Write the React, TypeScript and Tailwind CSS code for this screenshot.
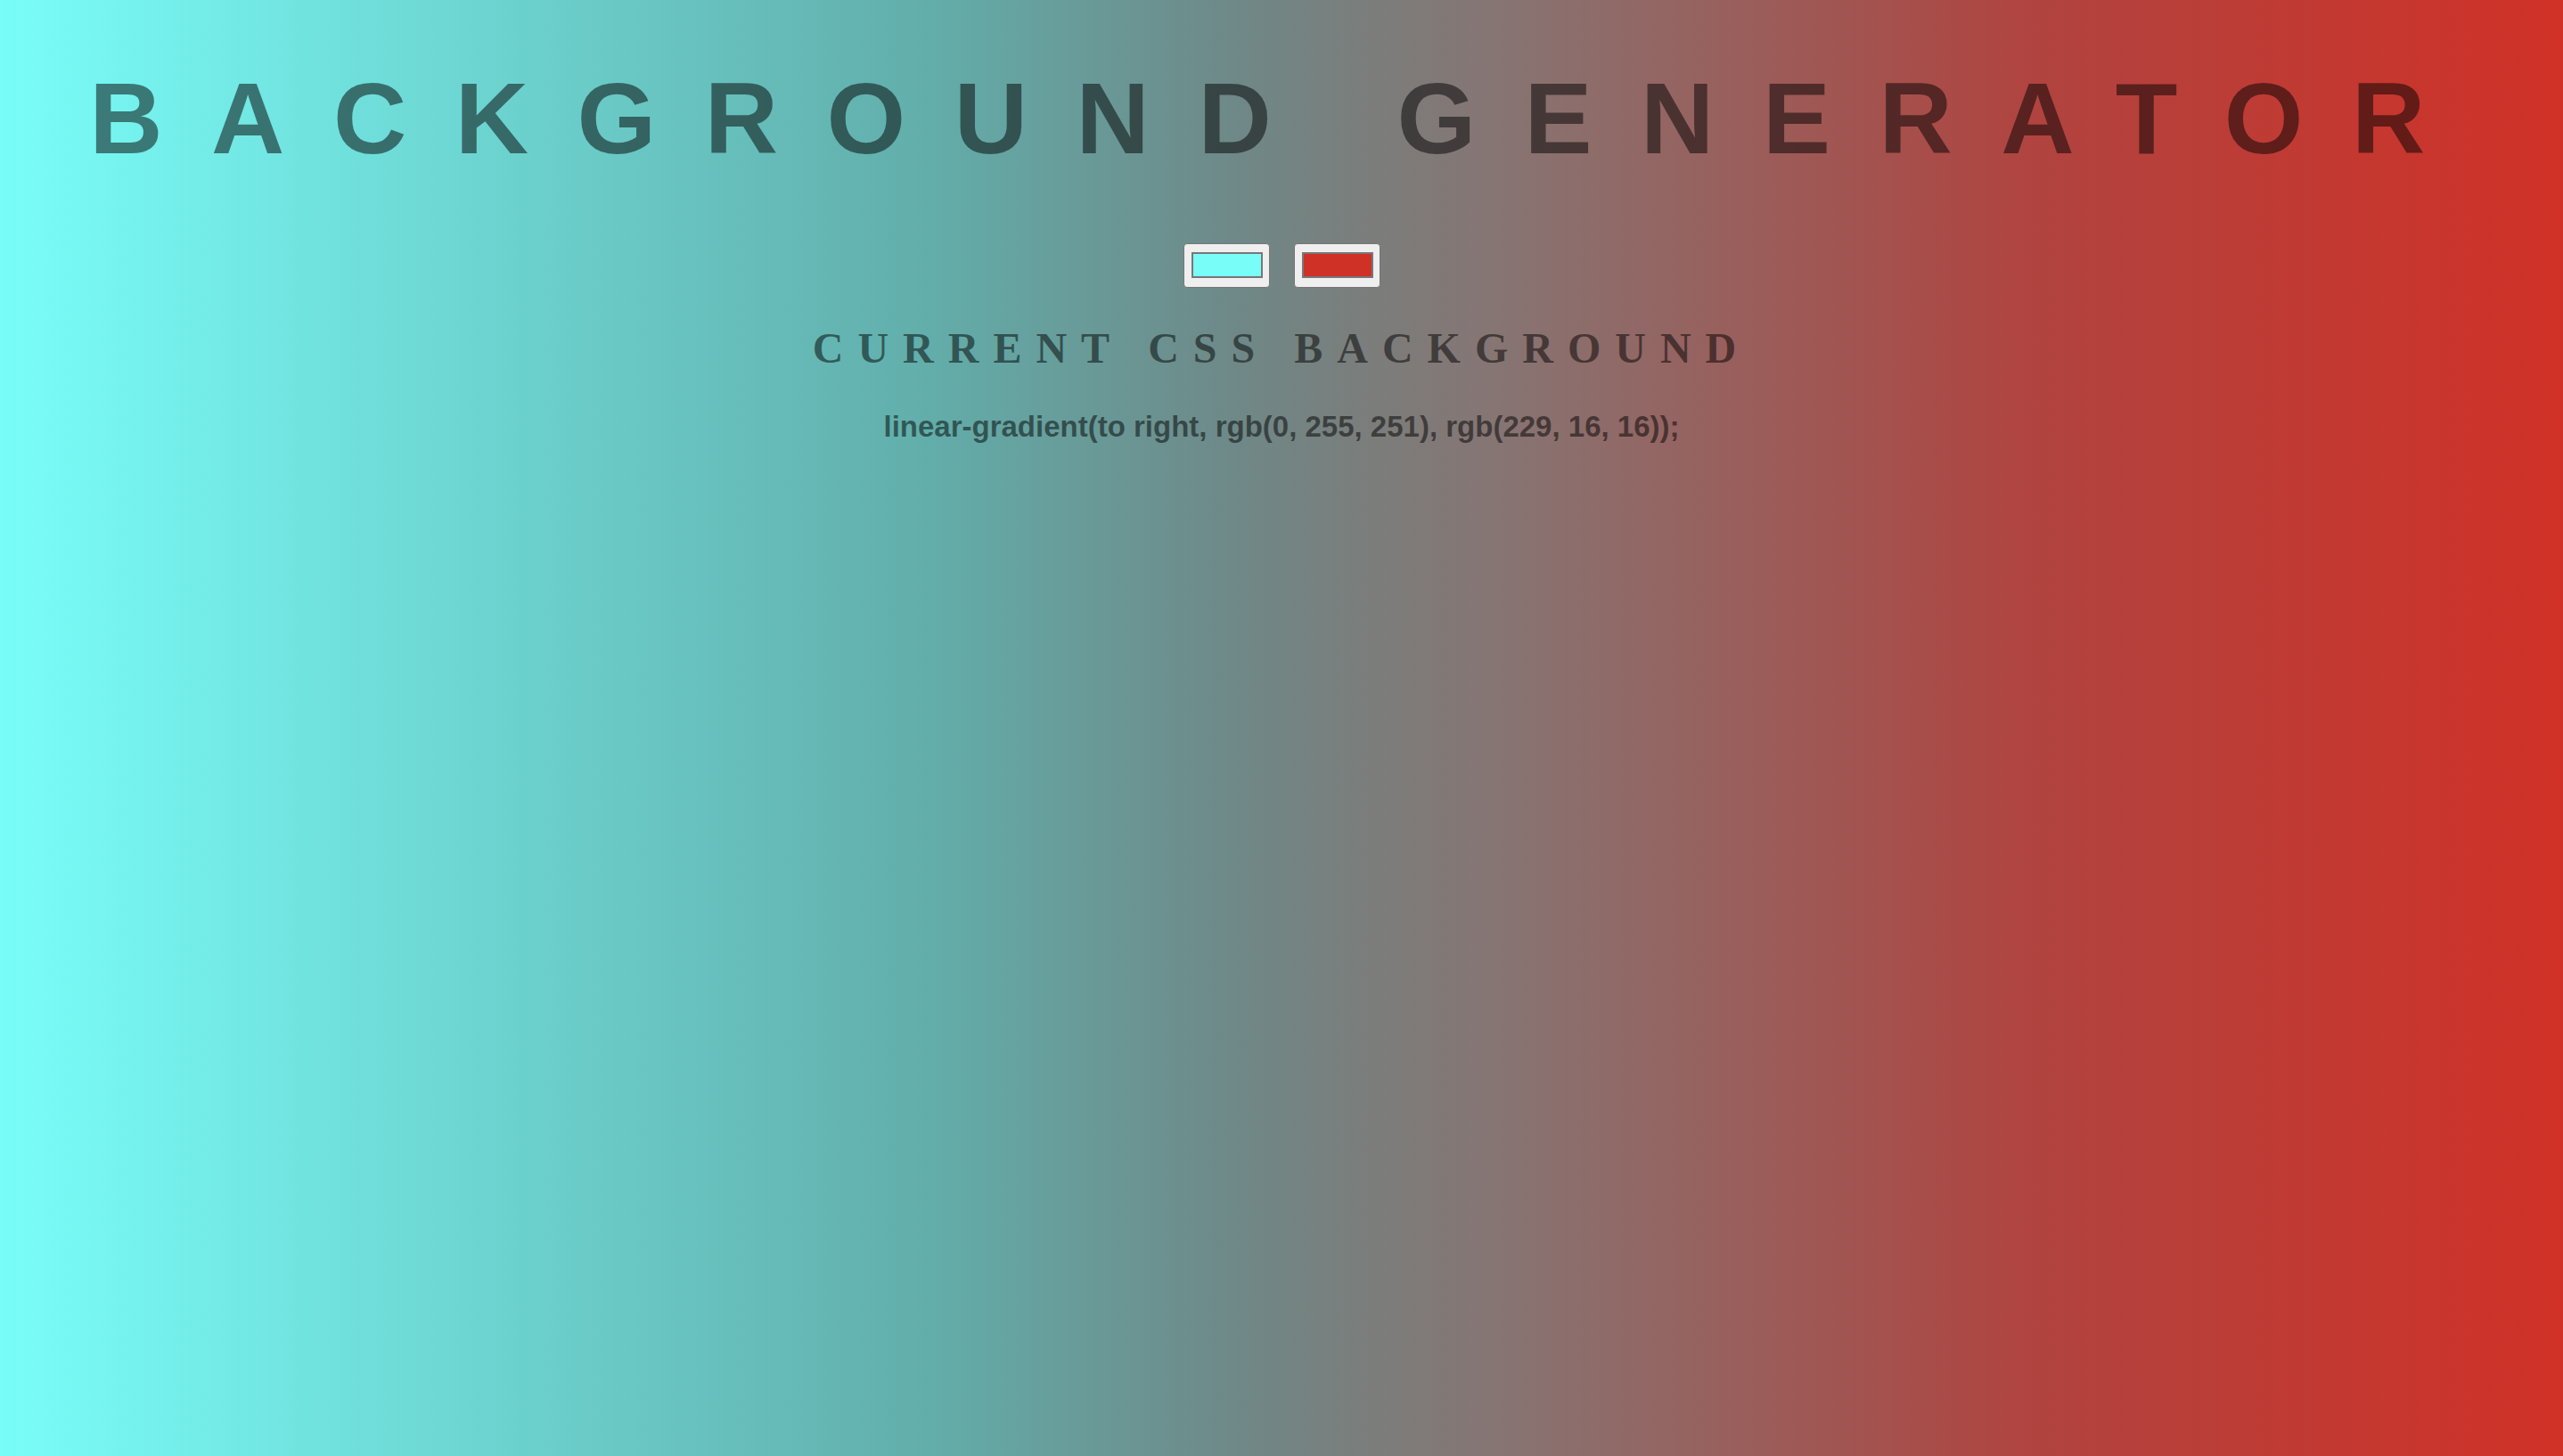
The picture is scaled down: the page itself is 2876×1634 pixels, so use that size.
import { useState } from 'react';

export default function App() {
  const [color1, setColor1] = useState('#79fdf9');
  const [color2, setColor2] = useState('#d03127');

  const inputClass =
    'block w-[97px] h-[50px] p-0 bg-[#efefef] border border-[#767676] rounded-[4px] cursor-pointer [&::-webkit-color-swatch-wrapper]:pt-[9px] [&::-webkit-color-swatch-wrapper]:pb-[10px] [&::-webkit-color-swatch-wrapper]:pl-[8px] [&::-webkit-color-swatch-wrapper]:pr-[7px] [&::-webkit-color-swatch]:border-2 [&::-webkit-color-swatch]:border-solid [&::-webkit-color-swatch]:border-[#777777] [&::-webkit-color-swatch]:rounded-none';

  return (
    <div className="min-h-screen w-full bg-[linear-gradient(to_right,#79fdf9_0%,#6dd6d2_18%,#62aeab_36%,#6e8988_48%,#7a7e7c_53%,#857674_58%,#b04440_79%,#d03127_100%)] text-center text-black/50">
      {/* Title */}
      <h1 className="pt-[76px] text-[114px] leading-none font-bold tracking-[54.5px] font-['Liberation_Sans',Arial,sans-serif] whitespace-nowrap">
        BACKGROUND GENERATOR
      </h1>

      {/* Color pickers */}
      <div className="mt-[83px] flex justify-center gap-[27px]">
        <input
          type="color"
          value={color1}
          onChange={(e) => setColor1(e.target.value)}
          className={inputClass}
        />
        <input
          type="color"
          value={color2}
          onChange={(e) => setColor2(e.target.value)}
          className={inputClass}
        />
      </div>

      {/* Current CSS */}
      <h3 className="mt-[44px] text-[48px] leading-none font-bold tracking-[16px] font-['Liberation_Serif','Times_New_Roman',serif]">
        CURRENT CSS BACKGROUND
      </h3>
      <p className="mt-[47px] text-[33px] leading-none font-bold font-['Liberation_Sans',Arial,sans-serif]">
        linear-gradient(to right, rgb(0, 255, 251), rgb(229, 16, 16));
      </p>
    </div>
  );
}
